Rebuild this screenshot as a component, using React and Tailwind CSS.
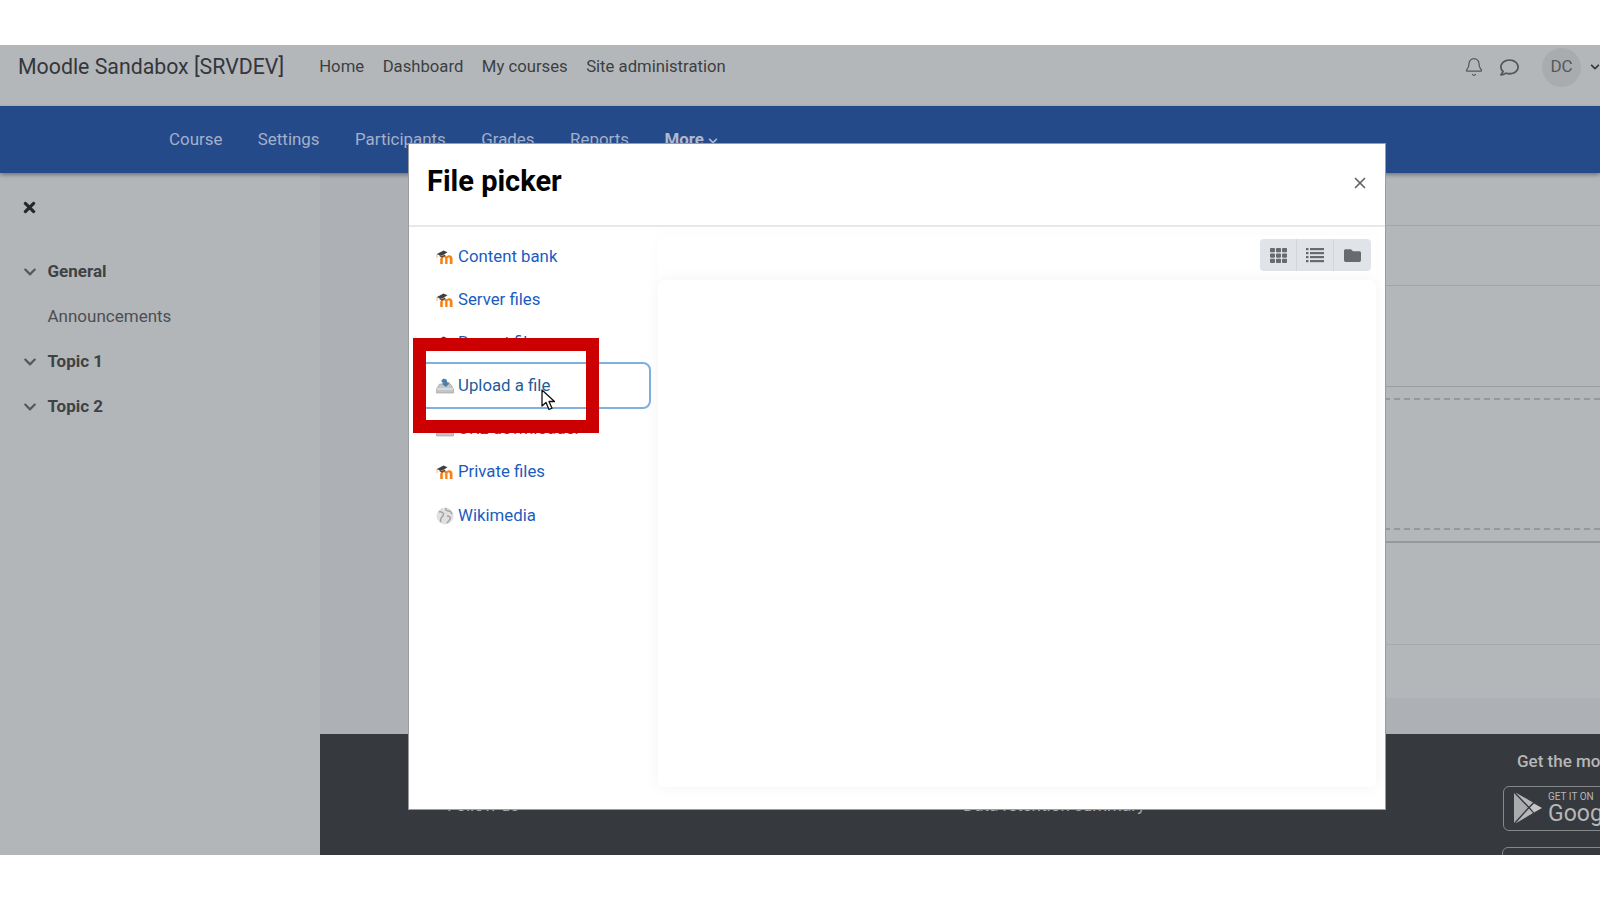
import React from "react";
import { FaRegComment, FaChevronDown, FaTimes, FaTh, FaFolder } from "react-icons/fa";
import { Bell, X } from "lucide-react";

function MoodleIcon() {
  return (
    <svg width="18" height="14" viewBox="0 0 18 14" className="shrink-0">
      <path d="M5 7.500c.3-1.500 1.600-2.300 3-2.300 1.300 0 2.200.5 2.700 1.300.6-.9 1.600-1.300 2.600-1.300 2 0 3.200 1.300 3.200 3.300V14h-2.700V8.800c0-.9-.4-1.300-1.100-1.300-.8 0-1.200.5-1.200 1.300V14H9.200V8.800c0-.9-.4-1.300-1.100-1.300-.8 0-1.300.5-1.300 1.300V14H4.200V8.500z" fill="#f98012" />
      <path d="M0.500 4.200 7.500 0.600 11.500 2.200 6 5.800z" fill="#3f3f3f" />
      <path d="M3.500 4.500 6 6.500 9 4.500 9 6 6 7.600 3.500 6.200z" fill="#3f3f3f" />
      <path d="M1 4.400V8" stroke="#f0a060" strokeWidth="0.8" />
    </svg>
  );
}

function TrayIcon({ arrow }) {
  return (
    <svg width="18" height="16" viewBox="0 0 18 16" className="shrink-0">
      <path d="M3.500 6h11L17.500 11v4H0.500v-4z" fill="#c3c5c7" stroke="#9a9c9e" strokeWidth="0.6" />
      <path d="M1 11h16" stroke="#eeeeee" strokeWidth="1" />
      {arrow && <path d="M5 3 7.500 0.500 10.500 1.500 11.500 4.500h2.500L10 9 5.500 5.500h2z" fill="#4a7fae" />}
    </svg>
  );
}

function GlobeIcon() {
  return (
    <svg width="18" height="18" viewBox="0 0 18 18" className="shrink-0">
      <circle cx="9" cy="9" r="8.500" fill="#e0e0e0" />
      <path d="M3 5c2-1 3 0 4 1s0 3-1 4-2 3-1 5M10 1c-1 2 1 3 3 3s2 2 3 3M11 9c2 0 4 1 3 3s-2 3-3 4" stroke="#a0a0a0" strokeWidth="1.400" fill="none" />
    </svg>
  );
}

function ListIcon() {
  return (
    <svg width="18" height="16" viewBox="0 0 18 16" fill="currentColor">
      <rect x="0" y="1" width="2.500" height="2.200" />
      <rect x="0" y="5" width="2.500" height="2.200" />
      <rect x="0" y="9" width="2.500" height="2.200" />
      <rect x="0" y="13" width="2.500" height="2.200" />
      <rect x="4" y="1" width="14" height="2.200" />
      <rect x="4" y="5" width="14" height="2.200" />
      <rect x="4" y="9" width="14" height="2.200" />
      <rect x="4" y="13" width="14" height="2.200" />
    </svg>
  );
}

function PlayIcon() {
  return (
    <svg width="30" height="34" viewBox="0 0 30 32" className="shrink-0">
      <path d="M1 1 15 15.500 1 31z" fill="#a9abad" />
      <path d="M2.500 0.500 20 10.500 16 14.500z" fill="#b5b7b9" />
      <path d="M2.500 31.500 20 21 16 16.500z" fill="#b5b7b9" />
      <path d="M21 11.500 29 16 21 20.500 17 15.500z" fill="#c2c4c6" />
    </svg>
  );
}

function Cursor() {
  return (
    <svg width="16" height="22" viewBox="0 0 16 22" className="absolute left-[541px] top-[344px] z-30">
      <path d="M1 1v16l4-3.500 3 7 3-1.300-3-6.700h5.500z" fill="#ffffff" stroke="#111111" strokeWidth="1.300" strokeLinejoin="round" />
    </svg>
  );
}

const topLinks = ["Home", "Dashboard", "My courses", "Site administration"];
const tabs = ["Course", "Settings", "Participants", "Grades", "Reports"];

function PickerItem({ icon, label, active, className = "" }) {
  return (
    <div
      className={
        (active
          ? "h-[47px] -my-[2px] flex items-center pl-[15px] rounded-lg border-2 border-[#7fb0e0] text-[#1d5d99] "
          : "h-[43px] flex items-center pl-[15px] border-2 border-transparent text-[#1a5cc0] ") + className
      }
    >
      <span className="w-[22px] flex items-center shrink-0">{icon}</span>
      <span className="whitespace-nowrap">{label}</span>
    </div>
  );
}

function FilePicker() {
  return (
    <div className="absolute left-[408px] top-[98px] w-[978px] h-[667px] z-10 bg-white border border-[#9a9da0] flex flex-col">
      <div className="h-[83px] shrink-0 flex items-start justify-between pt-[17px] pl-[18px] pr-[16px] border-b-2 border-[#e6e8eb]">
        <h2 className="text-[29px] font-bold text-black leading-[40px]">File picker</h2>
        <X size={18} strokeWidth={2.2} className="text-[#5f6265] mt-[13px]" />
      </div>
      <div className="flex-1 flex min-h-0">
        <div className="w-[249px] shrink-0 pl-[10px] pr-[7px] pt-[8px] text-[16.800px]">
          <PickerItem icon={<MoodleIcon />} label="Content bank" />
          <PickerItem icon={<MoodleIcon />} label="Server files" />
          <PickerItem icon={<MoodleIcon />} label="Recent files" />
          <PickerItem icon={<TrayIcon arrow />} label="Upload a file" active />
          <PickerItem icon={<TrayIcon />} label="URL downloader" />
          <PickerItem icon={<MoodleIcon />} label="Private files" />
          <PickerItem icon={<GlobeIcon />} label="Wikimedia" className="mt-[1px]" />
        </div>
        <div className="flex-1 flex flex-col pr-[9px] pt-[8px] pb-[22px]">
          <div className="h-[45px] shrink-0 flex justify-end items-start pt-[4px] pr-[5px] bg-white rounded-t-md shadow-[0_0_14px_rgba(0,0,0,0.025)]">
            <div className="flex rounded bg-[#e0e3e7] text-[#686b6e] text-[17px]">
              <span className="w-[37px] h-[32px] flex items-center justify-center border-r border-[#d2d5d9]"><FaTh /></span>
              <span className="w-[37px] h-[32px] flex items-center justify-center border-r border-[#d2d5d9]"><ListIcon /></span>
              <span className="w-[37px] h-[32px] flex items-center justify-center"><FaFolder /></span>
            </div>
          </div>
          <div className="flex-1 bg-white rounded-md shadow-[0_0_16px_rgba(0,0,0,0.05)]" />
        </div>
      </div>
    </div>
  );
}

function ContentCard() {
  return (
    <div className="flex-1 ml-[90px] flex flex-col bg-[#b4b7ba]">
      <div className="h-[53px] border-b border-[#a2a5a8]" />
      <div className="h-[60px] border-b border-[#a2a5a8]" />
      <div className="h-[101px] border-b border-[#9b9ea1]" />
      <div className="h-[156px] border-b-2 border-[#96999c] flex flex-col justify-between pt-[11px] pb-[11px]">
        <div className="border-t-2 border-dashed border-[#96999c] ml-[4px]" />
        <div className="border-t-2 border-dashed border-[#96999c] ml-[4px]" />
      </div>
      <div className="h-[102px] border-b border-[#a6a9ac]" />
      <div className="h-[53px]" />
    </div>
  );
}

function Sidebar() {
  return (
    <aside className="w-[320px] shrink-0 bg-[#b3b6b9] text-[#3a3d40] text-[17px]">
      <div className="pl-[21px] pt-[26px] h-[87px]">
        <FaTimes className="text-[17px] text-[#25272a]" />
      </div>
      <div className="flex items-center h-[23px] pl-[23px] font-bold text-[#3f4245]">
        <FaChevronDown className="text-[14px] text-[#55585b]" />
        <span className="ml-[10.500px]">General</span>
      </div>
      <div className="flex items-center h-[23px] mt-[22px] pl-[47.500px] text-[#4c4f52]">Announcements</div>
      <div className="flex items-center h-[23px] mt-[22px] pl-[23px] font-bold text-[#3f4245]">
        <FaChevronDown className="text-[14px] text-[#55585b]" />
        <span className="ml-[10.500px]">Topic 1</span>
      </div>
      <div className="flex items-center h-[23px] mt-[22px] pl-[23px] font-bold text-[#3f4245]">
        <FaChevronDown className="text-[14px] text-[#55585b]" />
        <span className="ml-[10.500px]">Topic 2</span>
      </div>
    </aside>
  );
}

function Footer() {
  return (
    <div className="h-[122px] shrink-0 bg-[#36393d] text-[#a9abad] flex text-[17px] whitespace-nowrap overflow-hidden">
      <div className="w-[127px] shrink-0" />
      <div className="w-[516px] shrink-0 pt-[59px]">Follow us</div>
      <div className="w-[540px] shrink-0 pt-[59px]">Data retention summary</div>
      <div className="flex-1 pt-[15px] pl-[14px]">
        <div className="font-medium text-[#b5b7b9]">Get the mobile app</div>
        <div className="mt-[11px] w-[160px] h-[45px] -ml-[14px] rounded-md border border-[#85888b] flex items-center pl-[9px] gap-[5px]">
          <PlayIcon />
          <div className="leading-none">
            <div className="text-[10px] text-[#b5b7b9]">GET IT ON</div>
            <div className="text-[23px] text-[#b5b7b9]">Google Play</div>
          </div>
        </div>
        <div className="mt-[16px] w-[160px] h-[45px] -ml-[15px] rounded-md border border-[#85888b]" />
      </div>
    </div>
  );
}

export default function App() {
  return (
    <div className="w-full h-screen bg-white flex flex-col overflow-hidden font-[Roboto,sans-serif]">
      <div className="h-[45px] shrink-0" />
      <div className="relative flex-1 min-h-0 overflow-hidden flex flex-col bg-[#adb0b4]">
        <header className="h-[61px] shrink-0 bg-[#b4b7ba] flex items-center pl-[18px] pb-[17px] text-[#3c3f42]">
          <span className="text-[21.300px] mr-[35px] text-[#33363a]">Moodle Sandabox [SRVDEV]</span>
          <nav className="flex gap-[18.500px] text-[16.700px]">
            {topLinks.map((l) => (
              <span key={l}>{l}</span>
            ))}
          </nav>
          <div className="ml-auto flex items-center text-[#55585b]">
            <Bell size={20} strokeWidth={1.500} />
            <FaRegComment className="text-[19px] ml-[16px]" />
            <span className="ml-[23px] w-[39px] h-[39px] rounded-full bg-[#a9acaf] flex items-center justify-center text-[17px]">DC</span>
            <FaChevronDown className="text-[10px] ml-[9px] text-[#33363a] mr-0" />
          </div>
        </header>
        <div className="h-[67px] shrink-0 bg-[#254a8a] flex items-center pl-[169px] gap-[35.500px] text-[16.900px] text-[#a3b0ca] shadow-[0_2px_4px_rgba(0,0,0,0.35)] z-[1]">
          {tabs.map((t) => (
            <span key={t}>{t}</span>
          ))}
          <span className="font-bold text-[#aeb8cf] flex items-center gap-[4px]">
            More <FaChevronDown className="text-[10px] mt-[3px]" />
          </span>
        </div>
        <div className="flex-1 min-h-0 flex">
          <Sidebar />
          <div className="flex-1 min-w-0 flex flex-col">
            <ContentCard />
            <div className="h-[36px] shrink-0" />
            <Footer />
          </div>
        </div>
        <FilePicker />
        <div className="absolute left-[413px] top-[293px] w-[186px] h-[95px] z-20 border-[13px] border-[#cc0000]" />
        <Cursor />
      </div>
      <div className="h-[45px] shrink-0" />
    </div>
  );
}
